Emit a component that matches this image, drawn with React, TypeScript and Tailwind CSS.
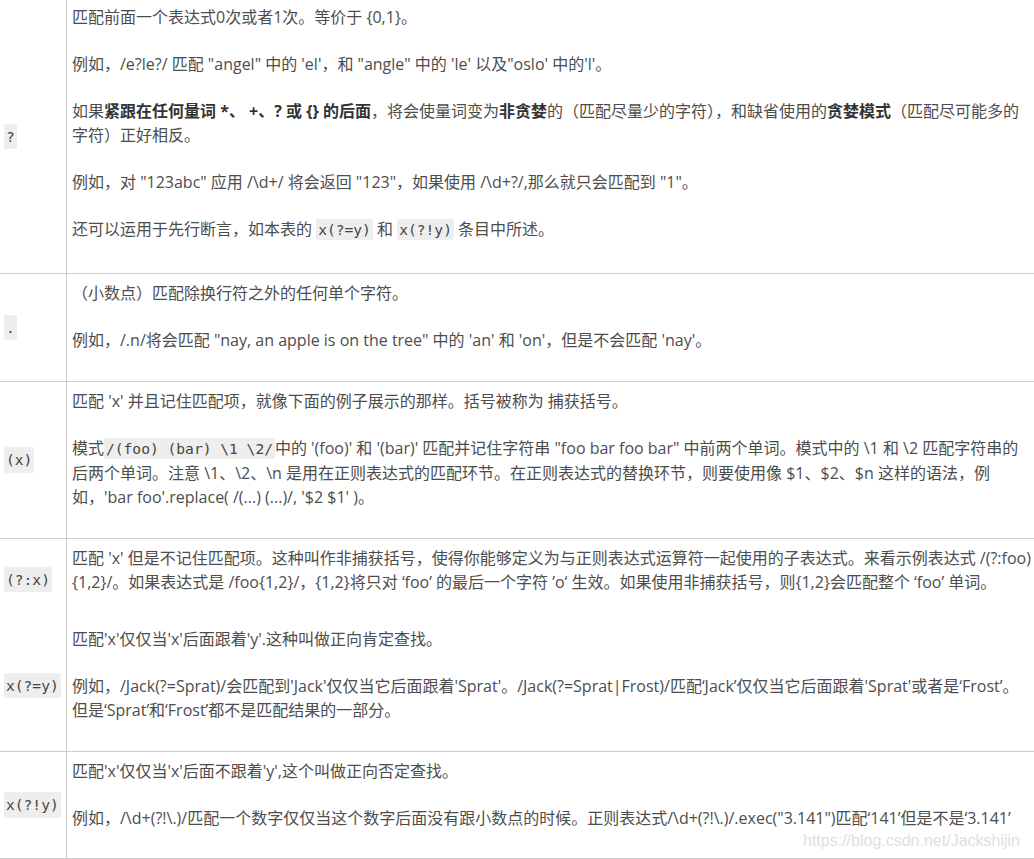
import React from "react";

const Code = ({ children }: { children: React.ReactNode }) => (
  <code className="font-['DejaVu_Sans_Mono',monospace] text-[14.6px] bg-[#eeeeee] rounded-[2px] px-[2px] py-[2px] text-[#444444]">
    {children}
  </code>
);

const P = ({ children }: { children: React.ReactNode }) => (
  <p className="leading-[24px] mb-[23px]">{children}</p>
);

const B = ({ children }: { children: React.ReactNode }) => (
  <b className="font-bold text-[#333333]">{children}</b>
);

function Row({
  code,
  children,
  pt,
  pb,
  border = true,
}: {
  code: string;
  children: React.ReactNode;
  pt: string;
  pb: string;
  border?: boolean;
}) {
  return (
    <div className={"flex " + (border ? "border-b border-[#cccccc]" : "")}>
      <div className="w-[67px] shrink-0 border-r border-[#cccccc] pl-[4px] flex items-center">
        <Code>{code}</Code>
      </div>
      <div className={"flex-1 pl-[5px] " + pt + " " + pb}>{children}</div>
    </div>
  );
}

export default function App() {
  return (
    <div className="relative w-[1034px] h-[859px] overflow-hidden bg-white text-[16px] text-[#4d4d4d] font-['Open_Sans','Noto_Sans_CJK_SC',sans-serif]">
      <Row code="?" pt="pt-[5px]" pb="pb-[8px]">
        <P>匹配前面一个表达式0次或者1次。等价于 {"{0,1}"}。</P>
        <P>例如，/e?le?/ 匹配 "angel" 中的 'el'，和 "angle" 中的 'le' 以及"oslo' 中的'l'。</P>
        <P>
          如果<B>紧跟在任何量词 *、 +、? 或 {"{}"} 的后面</B>，将会使量词变为<B>非贪婪</B>的（匹配尽量少的字符），和缺省使用的<B>贪婪模式</B>（匹配尽可能多的
          <br />
          字符）正好相反。
        </P>
        <P>例如，对 "123abc" 应用 /\d+/ 将会返回 "123"，如果使用 /\d+?/,那么就只会匹配到 "1"。</P>
        <P>
          还可以运用于先行断言，如本表的 <Code>x(?=y)</Code> 和 <Code>x(?!y)</Code> 条目中所述。
        </P>
      </Row>
      <Row code="." pt="pt-[7px]" pb="pb-[6px]">
        <P>（小数点）匹配除换行符之外的任何单个字符。</P>
        <P>例如，/.n/将会匹配 "nay, an apple is on the tree" 中的 'an' 和 'on'，但是不会匹配 'nay'。</P>
      </Row>
      <Row code="(x)" pt="pt-[7px]" pb="pb-[6px]">
        <P>匹配 'x' 并且记住匹配项，就像下面的例子展示的那样。括号被称为 捕获括号。</P>
        <P>
          模式<Code>/(foo) (bar) \1 \2/</Code>中的 '(foo)' 和 '(bar)' 匹配并记住字符串 "foo bar foo bar" 中前两个单词。模式中的 \1 和 \2 匹配字符串的
          <br />
          后两个单词。注意 \1、\2、\n 是用在正则表达式的匹配环节。在正则表达式的替换环节，则要使用像 $1、$2、$n 这样的语法，例
          <br />
          如，'bar foo'.replace( /(...) (...)/, '$2 $1' )。
        </P>
      </Row>
      <Row code="(?:x)" pt="pt-[7px]" pb="pb-[3px]" border={false}>
        <P>
          匹配 'x' 但是不记住匹配项。这种叫作非捕获括号，使得你能够定义为与正则表达式运算符一起使用的子表达式。来看示例表达式 /(?:foo)
          <br />
          {"{1,2}"}/。如果表达式是 /foo{"{1,2}"}/，{"{1,2}"}将只对 ‘foo’ 的最后一个字符 ’o‘ 生效。如果使用非捕获括号，则{"{1,2}"}会匹配整个 ‘foo’ 单词。
        </P>
      </Row>
      <Row code="x(?=y)" pt="pt-[7px]" pb="pb-[6px]">
        <P>匹配'x'仅仅当'x'后面跟着'y'.这种叫做正向肯定查找。</P>
        <P>
          例如，/Jack(?=Sprat)/会匹配到'Jack'仅仅当它后面跟着'Sprat'。/Jack(?=Sprat|Frost)/匹配‘Jack’仅仅当它后面跟着'Sprat'或者是‘Frost’。
          <br />
          但是‘Sprat’和‘Frost’都不是匹配结果的一部分。
        </P>
      </Row>
      <Row code="x(?!y)" pt="pt-[7px]" pb="pb-[5px]">
        <P>匹配'x'仅仅当'x'后面不跟着'y',这个叫做正向否定查找。</P>
        <P>例如，/\d+(?!\.)/匹配一个数字仅仅当这个数字后面没有跟小数点的时候。正则表达式/\d+(?!\.)/.exec("3.141")匹配‘141’但是不是‘3.141’</P>
      </Row>
      <div className="absolute left-[803px] top-[831px] text-[16px] leading-[20px] text-[#e0e0e0] font-['Liberation_Sans',Arial,sans-serif] whitespace-nowrap">
        https://blog.csdn.net/Jackshijin
      </div>
    </div>
  );
}
